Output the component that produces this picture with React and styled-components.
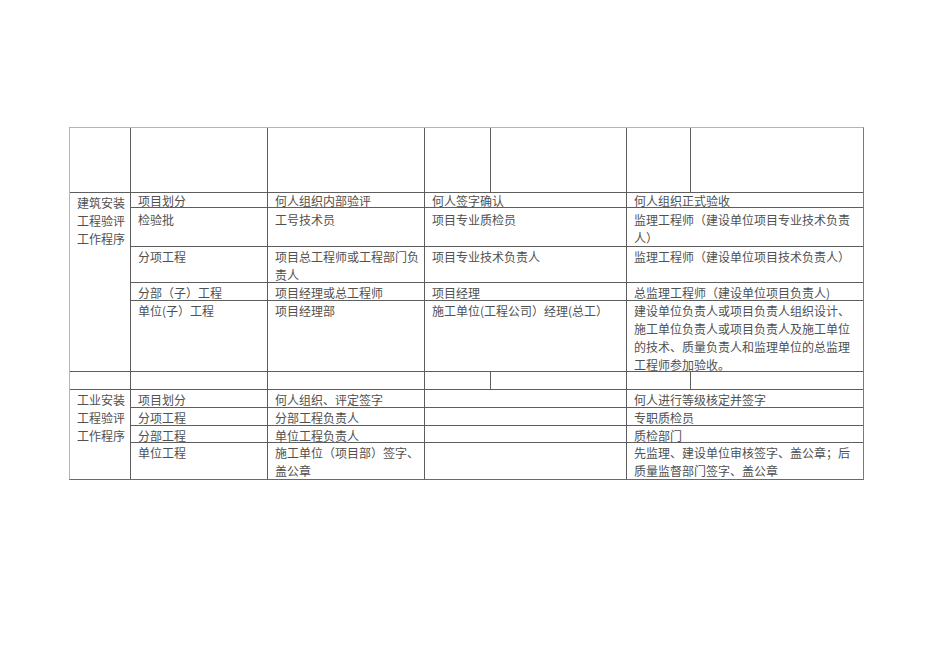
import styled, { createGlobalStyle } from 'styled-components'

const GlobalStyle = createGlobalStyle`
  html, body { margin: 0; padding: 0; background: #fff; }
  body { font-family: "Noto Sans CJK SC", "Noto Sans", sans-serif; }
`

const Page = styled.div`
  padding: 127px 0 0 69px;
  min-height: 672px;
  box-sizing: border-box;
`

const Table = styled.div`
  display: grid;
  width: max-content;
  grid-template-columns: 60px 136px 156px 65px 135px 63px 172px;
  grid-template-rows: 64px 14px 38px 35px 17px 70px 17px 17px 17px 16px 36px;
  gap: 1px;
  background: #5e5e5e;
  border-top: 1px solid #b4b4b4;
  border-left: 1px solid #b4b4b4;
  border-right: 1px solid #7a7a7a;
  border-bottom: 1px solid #6a6a6a;
`

const Cell = styled.div`
  background: #fff;
  grid-column: span ${({ $span }) => $span || 1};
  grid-row: span ${({ $rows }) => $rows || 1};
  padding: ${({ $pt }) => ($pt === undefined ? 1 : $pt)}px 4px 0 7px;
  font-size: 12px;
  line-height: ${({ $lh }) => $lh || 18}px;
  color: #505050;
  overflow: visible;
  min-width: 0;
  min-height: 0;
`

const build = {
  rows: 5, label: '建筑安装工程验评工作程序', items: [
    { cells: ['项目划分', '何人组织内部验评', '何人签字确认', '何人组织正式验收'], lh: 15, pt: 0 },
    { cells: ['检验批', '工号技术员', '项目专业质检员', '监理工程师（建设单位项目专业技术负责人）'], pt: 3 },
    { cells: ['分项工程', '项目总工程师或工程部门负责人', '项目专业技术负责人', '监理工程师（建设单位项目技术负责人）'] },
    { cells: ['分部（子）工程', '项目经理或总工程师', '项目经理', '总监理工程师（建设单位项目负责人)'] },
    { cells: ['单位(子）工程', '项目经理部', '施工单位(工程公司）经理(总工）', '建设单位负责人或项目负责人组织设计、施工单位负责人或项目负责人及施工单位的技术、质量负责人和监理单位的总监理工程师参加验收。'] },
  ],
}

const industry = {
  rows: 4, label: '工业安装工程验评工作程序', items: [
    { cells: ['项目划分', '何人组织、评定签字', '', '何人进行等级核定并签字'] },
    { cells: ['分项工程', '分部工程负责人', '', '专职质检员'] },
    { cells: ['分部工程', '单位工程负责人', '', '质检部门'] },
    { cells: ['单位工程', '施工单位（项目部）签字、盖公章', '', '先监理、建设单位审核签字、盖公章；后质量监督部门签字、盖公章'] },
  ],
}

function SplitRow({ id }) {
  return Array.from({ length: 7 }, (_, i) => <Cell key={id + i} />)
}

function Section({ data, id }) {
  return (
    <>
      <Cell $rows={data.rows}>{data.label}</Cell>
      {data.items.map((row, r) =>
        row.cells.map((text, c) => (
          <Cell key={`${id}-${r}-${c}`} $span={c >= 2 ? 2 : 1} $pt={row.pt} $lh={row.lh}>
            {text}
          </Cell>
        ))
      )}
    </>
  )
}

export default function App() {
  return (
    <Page>
      <GlobalStyle />
      <Table>
        <SplitRow id="top" />
        <Section data={build} id="b" />
        <SplitRow id="mid" />
        <Section data={industry} id="i" />
      </Table>
    </Page>
  )
}
